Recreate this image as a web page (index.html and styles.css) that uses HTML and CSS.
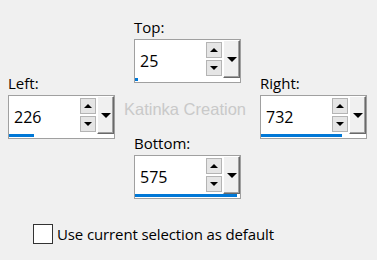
FILE: index.html
```html
<!DOCTYPE html>
<html>
<head>
    <title>Offset</title>
    <link rel="stylesheet" href="styles.css">
</head>
<body>
    <div class="dialog">
        <div class="fields">
            <div class="field field-top">
                <label>Top:</label>
                <div class="spin">
                    <div class="spin-main">
                        <span class="spin-value">25</span>
                        <div class="spin-arrows">
                            <span class="arrow-btn"><span class="tri-up"></span></span>
                            <span class="arrow-btn"><span class="tri-down"></span></span>
                        </div>
                        <span class="drop-btn"><span class="tri-drop"></span></span>
                    </div>
                    <div class="spin-bar"><span class="bar-fill" style="width: 3px"></span></div>
                </div>
            </div>

            <div class="field field-left">
                <label>Left:</label>
                <div class="spin">
                    <div class="spin-main">
                        <span class="spin-value">226</span>
                        <div class="spin-arrows">
                            <span class="arrow-btn"><span class="tri-up"></span></span>
                            <span class="arrow-btn"><span class="tri-down"></span></span>
                        </div>
                        <span class="drop-btn"><span class="tri-drop"></span></span>
                    </div>
                    <div class="spin-bar"><span class="bar-fill" style="width: 25px"></span></div>
                </div>
            </div>

            <div class="watermark">Katinka Creation</div>

            <div class="field field-right">
                <label>Right:</label>
                <div class="spin">
                    <div class="spin-main">
                        <span class="spin-value">732</span>
                        <div class="spin-arrows">
                            <span class="arrow-btn"><span class="tri-up"></span></span>
                            <span class="arrow-btn"><span class="tri-down"></span></span>
                        </div>
                        <span class="drop-btn"><span class="tri-drop"></span></span>
                    </div>
                    <div class="spin-bar"><span class="bar-fill" style="width: 81px"></span></div>
                </div>
            </div>

            <div class="field field-bottom">
                <label>Bottom:</label>
                <div class="spin">
                    <div class="spin-main">
                        <span class="spin-value">575</span>
                        <div class="spin-arrows">
                            <span class="arrow-btn"><span class="tri-up"></span></span>
                            <span class="arrow-btn"><span class="tri-down"></span></span>
                        </div>
                        <span class="drop-btn"><span class="tri-drop"></span></span>
                    </div>
                    <div class="spin-bar"><span class="bar-fill" style="width: 102px"></span></div>
                </div>
            </div>
        </div>

        <div class="check-row">
            <span class="checkbox"></span>
            <span class="check-label">Use current selection as default</span>
        </div>
    </div>
</body>
</html>
```

FILE: styles.css
```css
body {
    margin: 0;
    background-color: #f0f0f0;
    font-family: "Segoe UI", "Open Sans", "Noto Sans", sans-serif;
    font-size: 15px;
    color: #000;
}

.dialog {
    width: 377px;
    height: 260px;
    padding: 17px 0 0 8px;
    box-sizing: border-box;
}

.fields {
    display: grid;
    grid-template-columns: 107px 107px 107px;
    grid-template-rows: 56px 10px 50px 6px 60px;
    column-gap: 19px;
}

.field {
    display: flex;
    flex-direction: column;
}

.field label {
    display: block;
    height: 20px;
    line-height: 20px;
    margin-bottom: 2px;
}

.field-top {
    grid-column: 2;
    grid-row: 1 / 3;
}

.field-left {
    grid-column: 1;
    grid-row: 2 / 5;
}

.field-right {
    grid-column: 3;
    grid-row: 2 / 5;
}

.field-bottom {
    grid-column: 2;
    grid-row: 4 / 6;
}

.watermark {
    grid-column: 1 / 4;
    grid-row: 3;
    align-self: center;
    text-align: center;
    padding: 2px 5px 0 0;
    font-family: "Liberation Sans", Arial, sans-serif;
    font-size: 16.5px;
    color: #c9c9c9;
    white-space: nowrap;
}

.spin {
    border: 1px solid #a0a0a0;
    background: white;
    padding-bottom: 1px;
}

.spin-main {
    display: flex;
    height: 38px;
}

.spin-value {
    flex: 1;
    display: flex;
    align-items: center;
    padding: 3px 0 0 5px;
    font-size: 16px;
}

.spin-arrows {
    display: flex;
    flex-direction: column;
    gap: 2px;
    padding: 2px 1px 2px 0;
}

.arrow-btn {
    width: 14px;
    flex: 1;
    display: flex;
    align-items: center;
    justify-content: center;
    background: #e5e5e5;
    border: 1px solid #b4b4b4;
}

.tri-up {
    width: 0;
    height: 0;
    border-left: 4px solid transparent;
    border-right: 4px solid transparent;
    border-bottom: 4px solid #000;
}

.tri-down {
    width: 0;
    height: 0;
    border-left: 4px solid transparent;
    border-right: 4px solid transparent;
    border-top: 4px solid #000;
}

.drop-btn {
    width: 15px;
    display: flex;
    align-items: center;
    justify-content: center;
    background: #f0f0f0;
    border-top: 1px solid #fff;
    border-left: 1px solid #fff;
    border-right: 1px solid #696969;
    border-bottom: 1px solid #696969;
    box-shadow: inset -1px -1px 0 #a0a0a0;
}

.tri-drop {
    width: 0;
    height: 0;
    border-left: 5px solid transparent;
    border-right: 5px solid transparent;
    border-top: 5px solid #000;
}

.spin-bar {
    height: 3px;
}

.bar-fill {
    display: block;
    height: 3px;
    background: #0078d7;
}

.check-row {
    display: flex;
    align-items: center;
    gap: 4px;
    margin: 25px 0 0 25px;
}

.checkbox {
    width: 18px;
    height: 18px;
    border: 1px solid #333;
    background: white;
}

.check-label {
    font-size: 15px;
    letter-spacing: -0.12px;
}
```
